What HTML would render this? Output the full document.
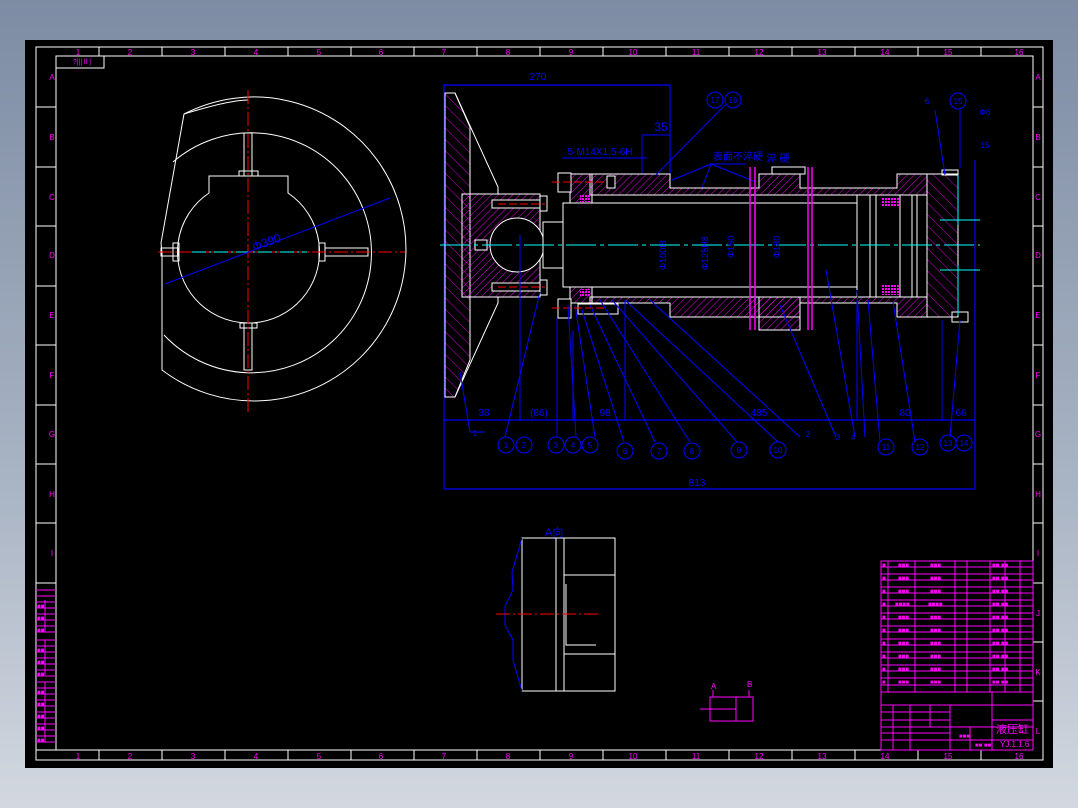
<!DOCTYPE html>
<html><head><meta charset="utf-8"><style>
html,body{margin:0;padding:0;width:1078px;height:808px;overflow:hidden;background:linear-gradient(#7d8ca4,#a9b4c4 60%,#d3d8e0);}
svg{position:absolute;left:0;top:0}
text{font-family:"Liberation Sans","Noto Sans CJK SC",sans-serif}
</style></head><body>
<svg width="1078" height="808" viewBox="0 0 1078 808">
<defs>
<pattern id="h1" width="5" height="5" patternUnits="userSpaceOnUse" patternTransform="rotate(45)"><line x1="0" y1="0" x2="0" y2="5" stroke="#f0f" stroke-width="0.9"/></pattern>
<pattern id="h2" width="8" height="8" patternUnits="userSpaceOnUse" patternTransform="rotate(-45)"><line x1="0" y1="0" x2="0" y2="8" stroke="#f0f" stroke-width="0.8"/></pattern>
<pattern id="h3" width="3" height="3" patternUnits="userSpaceOnUse"><rect width="2" height="2" fill="#f0f"/></pattern>
</defs>
<rect x="25" y="40" width="1028" height="728" fill="#000"/>
<g fill="none" stroke="#fff" stroke-width="1">
<rect x="36" y="47" width="1007" height="713"/>
<rect x="56" y="56" width="977" height="694"/>
<polyline points="56,68 104,68 104,56"/>
</g>
<g stroke="#fff" stroke-width="1">
<line x1="99" y1="47" x2="99" y2="56"/><line x1="162" y1="47" x2="162" y2="56"/><line x1="225" y1="47" x2="225" y2="56"/><line x1="288" y1="47" x2="288" y2="56"/><line x1="351" y1="47" x2="351" y2="56"/><line x1="414" y1="47" x2="414" y2="56"/><line x1="477" y1="47" x2="477" y2="56"/><line x1="540" y1="47" x2="540" y2="56"/><line x1="603" y1="47" x2="603" y2="56"/><line x1="666" y1="47" x2="666" y2="56"/><line x1="729" y1="47" x2="729" y2="56"/><line x1="792" y1="47" x2="792" y2="56"/><line x1="855" y1="47" x2="855" y2="56"/><line x1="918" y1="47" x2="918" y2="56"/><line x1="981" y1="47" x2="981" y2="56"/>
<line x1="99" y1="750" x2="99" y2="760"/><line x1="162" y1="750" x2="162" y2="760"/><line x1="225" y1="750" x2="225" y2="760"/><line x1="288" y1="750" x2="288" y2="760"/><line x1="351" y1="750" x2="351" y2="760"/><line x1="414" y1="750" x2="414" y2="760"/><line x1="477" y1="750" x2="477" y2="760"/><line x1="540" y1="750" x2="540" y2="760"/><line x1="603" y1="750" x2="603" y2="760"/><line x1="666" y1="750" x2="666" y2="760"/><line x1="729" y1="750" x2="729" y2="760"/><line x1="792" y1="750" x2="792" y2="760"/><line x1="855" y1="750" x2="855" y2="760"/><line x1="918" y1="750" x2="918" y2="760"/><line x1="981" y1="750" x2="981" y2="760"/>
<line x1="36" y1="107" x2="56" y2="107"/><line x1="36" y1="167" x2="56" y2="167"/><line x1="36" y1="226" x2="56" y2="226"/><line x1="36" y1="286" x2="56" y2="286"/><line x1="36" y1="345" x2="56" y2="345"/><line x1="36" y1="405" x2="56" y2="405"/><line x1="36" y1="464" x2="56" y2="464"/><line x1="36" y1="523" x2="56" y2="523"/><line x1="36" y1="583" x2="56" y2="583"/>
<line x1="1033" y1="107" x2="1043" y2="107"/><line x1="1033" y1="167" x2="1043" y2="167"/><line x1="1033" y1="226" x2="1043" y2="226"/><line x1="1033" y1="286" x2="1043" y2="286"/><line x1="1033" y1="345" x2="1043" y2="345"/><line x1="1033" y1="405" x2="1043" y2="405"/><line x1="1033" y1="464" x2="1043" y2="464"/><line x1="1033" y1="523" x2="1043" y2="523"/><line x1="1033" y1="583" x2="1043" y2="583"/><line x1="1033" y1="642" x2="1043" y2="642"/><line x1="1033" y1="701" x2="1043" y2="701"/>
</g>
<g fill="#f0f" font-size="8" text-anchor="middle">
<text x="78" y="55">1</text><text x="130" y="55">2</text><text x="193" y="55">3</text><text x="256" y="55">4</text><text x="319" y="55">5</text><text x="381" y="55">6</text><text x="444" y="55">7</text><text x="508" y="55">8</text><text x="571" y="55">9</text><text x="633" y="55">10</text><text x="696" y="55">11</text><text x="759" y="55">12</text><text x="822" y="55">13</text><text x="885" y="55">14</text><text x="948" y="55">15</text><text x="1019" y="55">16</text>
<text x="78" y="759">1</text><text x="130" y="759">2</text><text x="193" y="759">3</text><text x="256" y="759">4</text><text x="319" y="759">5</text><text x="381" y="759">6</text><text x="444" y="759">7</text><text x="508" y="759">8</text><text x="571" y="759">9</text><text x="633" y="759">10</text><text x="696" y="759">11</text><text x="759" y="759">12</text><text x="822" y="759">13</text><text x="885" y="759">14</text><text x="948" y="759">15</text><text x="1019" y="759">16</text>
<text x="52" y="80">A</text><text x="52" y="140">B</text><text x="52" y="200">C</text><text x="52" y="258">D</text><text x="52" y="318">E</text><text x="52" y="378">F</text><text x="52" y="437">G</text><text x="52" y="497">H</text><text x="52" y="556">I</text>
<text x="1038" y="80">A</text><text x="1038" y="140">B</text><text x="1038" y="200">C</text><text x="1038" y="258">D</text><text x="1038" y="318">E</text><text x="1038" y="378">F</text><text x="1038" y="437">G</text><text x="1038" y="497">H</text><text x="1038" y="556">I</text><text x="1038" y="616">J</text><text x="1038" y="675">K</text><text x="1038" y="734">L</text>
<text x="82" y="64" font-size="7">?|||Ⅱ|</text>
</g>
<g stroke="#f0f" stroke-width="1" fill="none">
<rect x="36" y="583" width="20" height="167" stroke="#fff"/>
<line x1="36" y1="590" x2="56" y2="590"/><line x1="36" y1="596" x2="56" y2="596"/><line x1="36" y1="602" x2="56" y2="602"/><line x1="36" y1="608" x2="56" y2="608"/><line x1="36" y1="614" x2="56" y2="614"/><line x1="36" y1="620" x2="56" y2="620"/><line x1="36" y1="626" x2="56" y2="626"/><line x1="36" y1="632" x2="56" y2="632"/><line x1="36" y1="640" x2="56" y2="640"/><line x1="36" y1="646" x2="56" y2="646"/><line x1="36" y1="652" x2="56" y2="652"/><line x1="36" y1="658" x2="56" y2="658"/><line x1="36" y1="664" x2="56" y2="664"/><line x1="36" y1="670" x2="56" y2="670"/><line x1="36" y1="676" x2="56" y2="676"/><line x1="36" y1="682" x2="56" y2="682"/><line x1="36" y1="688" x2="56" y2="688"/><line x1="36" y1="694" x2="56" y2="694"/><line x1="36" y1="700" x2="56" y2="700"/><line x1="36" y1="706" x2="56" y2="706"/><line x1="36" y1="712" x2="56" y2="712"/><line x1="36" y1="718" x2="56" y2="718"/><line x1="36" y1="724" x2="56" y2="724"/><line x1="36" y1="730" x2="56" y2="730"/><line x1="36" y1="736" x2="56" y2="736"/><line x1="36" y1="742" x2="56" y2="742"/>
<line x1="45" y1="600" x2="45" y2="632"/><line x1="45" y1="640" x2="45" y2="675"/><line x1="45" y1="682" x2="45" y2="742"/>
</g>
<g fill="#f0f" font-size="6" font-weight="bold">
<text x="37" y="608">■■</text><text x="37" y="620">■■</text><text x="37" y="632">■■</text><text x="37" y="652">■■</text><text x="37" y="664">■■</text><text x="37" y="676">■■</text><text x="37" y="694">■■</text><text x="37" y="706">■■</text><text x="37" y="718">■■</text><text x="37" y="730">■■</text><text x="37" y="742">■■</text>
</g>
<!-- LEFT VIEW -->
<g fill="none" stroke="#fff" stroke-width="1">
<path d="M184,114 A152,152 0 1 1 162,370 L162,253 L161,243 L184,114"/>
<path d="M184,114 Q230,100 248,100"/>
<path d="M173,162 A120,120 0 1 1 164,335"/>
<path d="M209,193 A71,71 0 1 0 288,193 L288,176 L209,176 Z"/>
<rect x="244" y="133" width="8" height="43"/><rect x="239" y="171" width="19" height="5"/>
<rect x="244" y="323" width="8" height="47"/><rect x="240" y="323" width="17" height="5"/>
<rect x="161" y="248" width="17" height="8"/><rect x="173" y="243" width="6" height="18"/>
<rect x="325" y="248" width="43" height="8"/><rect x="319" y="243" width="6" height="18"/>
</g>
<line x1="248" y1="90" x2="248" y2="412" stroke="#f00" stroke-dasharray="14,3,2,3"/>
<line x1="158" y1="252" x2="405" y2="252" stroke="#f00" stroke-dasharray="14,3,2,3"/>
<line x1="192" y1="252" x2="307" y2="252" stroke="#0ff" stroke-dasharray="14,3,2,3"/>
<line x1="165" y1="284" x2="390" y2="198" stroke="#00f"/>
<text x="252" y="248" fill="#00f" font-size="12" transform="rotate(-20 262 244)">Φ390</text>

<!-- MAIN VIEW -->
<g fill="none" stroke="#00f" stroke-width="1.2">
<polyline points="444,489 444,85 670,85 670,175"/>
<line x1="444" y1="420" x2="975" y2="420"/>
<polyline points="444,489 975,489 975,160"/>
</g>
<g fill="#00f" font-size="10" text-anchor="middle">
<text x="538" y="80">270</text><text x="661" y="131" font-size="12">35</text>
<text x="600" y="155">5-M14X1.5-6H</text>
<text x="484" y="416">38</text><text x="539" y="416">(86)</text><text x="605" y="416">98</text><text x="759" y="416">485</text><text x="905" y="416">80</text><text x="961" y="416">66</text>
<text x="697" y="486">813</text>
<text x="738" y="160">表面不淬硬</text><text x="778" y="162">淬 硬</text>
</g>
<g stroke="#00f" fill="none"><line x1="562" y1="158" x2="647" y2="158"/><line x1="642" y1="135" x2="642" y2="175"/><line x1="642" y1="135" x2="670" y2="135"/><line x1="710" y1="164" x2="745" y2="164"/>
<line x1="711" y1="164" x2="672" y2="180"/><line x1="711" y1="164" x2="702" y2="188"/><line x1="711" y1="164" x2="756" y2="182"/></g>
<polygon points="445,93 455,93 470,127 470,360 455,397 445,397" fill="url(#h2)" stroke="#fff"/>
<polyline points="455,93 498,187 498,194" fill="none" stroke="#fff"/>
<polyline points="498,297 498,303 455,397" fill="none" stroke="#fff"/>
<rect x="462" y="194" width="78" height="103" fill="url(#h1)" stroke="#fff"/>
<circle cx="517" cy="245" r="27" fill="#000" stroke="#fff"/>
<rect x="543" y="222" width="22" height="46" fill="#000" stroke="#fff"/>
<rect x="492" y="200" width="48" height="8" fill="#000" stroke="#fff"/><rect x="540" y="196" width="7" height="15" fill="#000" stroke="#fff"/>
<rect x="492" y="283" width="48" height="8" fill="#000" stroke="#fff"/><rect x="540" y="280" width="7" height="15" fill="#000" stroke="#fff"/>
<rect x="475" y="240" width="12" height="10" fill="#000" stroke="#fff"/>
<path d="M590,174 H670 V188 H759 V174 H800 V188 H897 V174 H927 V195 H590 Z" fill="url(#h1)" stroke="#fff"/>
<path d="M590,303 H670 V317 H759 V330 H800 V303 H897 V317 H927 V297 H590 Z" fill="url(#h1)" stroke="#fff"/>
<rect x="759" y="297" width="41" height="20" fill="url(#h1)" stroke="#fff"/>
<rect x="927" y="174" width="31" height="143" fill="url(#h2)" stroke="#fff"/>
<rect x="942" y="170" width="16" height="5" fill="none" stroke="#fff"/><rect x="952" y="312" width="16" height="10" fill="none" stroke="#fff"/>
<rect x="772" y="167" width="33" height="7" fill="none" stroke="#fff"/>
<rect x="570" y="174" width="22" height="129" fill="url(#h1)" stroke="#fff"/>
<rect x="558" y="173" width="13" height="19" fill="#000" stroke="#fff"/><rect x="558" y="299" width="13" height="19" fill="#000" stroke="#fff"/>
<rect x="578" y="304" width="40" height="10" fill="#000" stroke="#fff"/>
<rect x="563" y="203" width="294" height="84" fill="#000" stroke="#fff"/>
<rect x="857" y="195" width="60" height="102" fill="#000" stroke="#fff"/>
<line x1="870" y1="195" x2="870" y2="297" stroke="#fff"/><line x1="876" y1="195" x2="876" y2="297" stroke="#fff"/><line x1="900" y1="195" x2="900" y2="297" stroke="#fff"/><line x1="912" y1="195" x2="912" y2="297" stroke="#fff"/>
<rect x="881" y="197" width="18" height="9" fill="url(#h3)"/><rect x="881" y="285" width="18" height="10" fill="url(#h3)"/>
<rect x="580" y="195" width="10" height="7" fill="url(#h3)"/><rect x="580" y="289" width="10" height="7" fill="url(#h3)"/>
<rect x="607" y="176" width="8" height="12" fill="#000" stroke="#fff"/>
<line x1="440" y1="245" x2="980" y2="245" stroke="#0ff" stroke-dasharray="30,4,4,4"/>
<line x1="552" y1="182" x2="605" y2="182" stroke="#f00" stroke-dasharray="8,3"/>
<line x1="552" y1="308" x2="605" y2="308" stroke="#f00" stroke-dasharray="8,3"/>
<line x1="498" y1="204" x2="545" y2="204" stroke="#f00" stroke-dasharray="8,3"/><line x1="498" y1="287" x2="545" y2="287" stroke="#f00" stroke-dasharray="8,3"/>
<line x1="940" y1="220" x2="980" y2="220" stroke="#0ff"/><line x1="940" y1="270" x2="980" y2="270" stroke="#0ff"/>
<line x1="958" y1="175" x2="958" y2="225" stroke="#0ff"/><line x1="958" y1="265" x2="958" y2="315" stroke="#0ff"/>
<g stroke="#f0f" stroke-width="1.5"><line x1="750" y1="167" x2="750" y2="330"/><line x1="755" y1="167" x2="755" y2="330"/><line x1="808" y1="167" x2="808" y2="330"/><line x1="812" y1="167" x2="812" y2="330"/></g>
<g fill="#00f" font-size="9">
<text transform="translate(666 270) rotate(-90)">Φ100f8</text><text transform="translate(708 270) rotate(-90)">Φ125H8</text><text transform="translate(734 258) rotate(-90)">Φ150</text><text transform="translate(780 258) rotate(-90)">Φ180</text>
</g>
<g stroke="#00f" fill="none">
<line x1="460" y1="372" x2="470" y2="432"/><line x1="470" y1="432" x2="485" y2="432"/>
<line x1="540" y1="292" x2="505" y2="437"/><line x1="520" y1="235" x2="520" y2="420"/>
<line x1="557" y1="318" x2="557" y2="437"/><line x1="568" y1="305" x2="576" y2="437"/><line x1="575" y1="305" x2="595" y2="437"/>
<line x1="582" y1="310" x2="624" y2="442"/><line x1="590" y1="305" x2="655" y2="442"/><line x1="600" y1="300" x2="690" y2="442"/><line x1="612" y1="300" x2="737" y2="442"/><line x1="625" y1="300" x2="778" y2="442"/><line x1="650" y1="300" x2="800" y2="437"/><line x1="780" y1="305" x2="836" y2="437"/><line x1="826" y1="270" x2="855" y2="437"/><line x1="857" y1="290" x2="865" y2="437"/><line x1="868" y1="300" x2="880" y2="442"/><line x1="893" y1="302" x2="915" y2="442"/><line x1="960" y1="320" x2="950" y2="437"/>
<line x1="656" y1="175" x2="725" y2="105"/><line x1="935" y1="110" x2="945" y2="175"/><line x1="960" y1="110" x2="960" y2="168"/>
<line x1="573" y1="330" x2="573" y2="420"/><line x1="625" y1="300" x2="625" y2="420"/><line x1="857" y1="300" x2="857" y2="420"/><line x1="942" y1="320" x2="942" y2="420"/>
</g>
<g stroke="#00f" fill="none">
<circle cx="506" cy="445" r="8"/><circle cx="524" cy="445" r="8"/><circle cx="556" cy="445" r="8"/><circle cx="573" cy="445" r="8"/><circle cx="590" cy="445" r="8"/><circle cx="625" cy="451" r="8"/><circle cx="659" cy="451" r="8"/><circle cx="692" cy="451" r="8"/><circle cx="739" cy="450" r="8"/><circle cx="778" cy="450" r="8"/><circle cx="886" cy="447" r="8"/><circle cx="920" cy="447" r="8"/><circle cx="948" cy="443" r="8"/><circle cx="964" cy="443" r="8"/><circle cx="715" cy="100" r="8"/><circle cx="733" cy="100" r="8"/><circle cx="958" cy="101" r="8"/>
</g>
<g fill="#00f" font-size="8" text-anchor="middle">
<text x="506" y="448">1</text><text x="524" y="448">2</text><text x="556" y="448">3</text><text x="573" y="448">4</text><text x="590" y="448">5</text><text x="625" y="454">6</text><text x="659" y="454">7</text><text x="692" y="454">8</text><text x="739" y="453">9</text><text x="778" y="453">10</text><text x="886" y="450">11</text><text x="920" y="450">12</text><text x="948" y="446">13</text><text x="964" y="446">14</text><text x="715" y="103">17</text><text x="733" y="103">16</text><text x="958" y="104">15</text>
<text x="475" y="436">1</text><text x="808" y="437">2</text><text x="838" y="440">3</text><text x="853" y="440">4</text><text x="927" y="104">6</text><text x="985" y="115">Φ6</text><text x="985" y="148">15</text>
</g>
<g fill="none" stroke="#fff">
<rect x="522" y="538" width="93" height="153"/>
<line x1="556" y1="538" x2="556" y2="691"/><line x1="564" y1="538" x2="564" y2="691"/>
<line x1="564" y1="575" x2="615" y2="575"/><line x1="564" y1="654" x2="615" y2="654"/>
<polyline points="566,584 566,645 596,645"/>
</g>
<path d="M522,538 L512,572 L513,590 L505,606 L505,625 L513,640 L513,660 L522,691" fill="none" stroke="#00f"/>
<line x1="496" y1="614" x2="601" y2="614" stroke="#f00" stroke-dasharray="14,3,2,3"/>
<text x="545" y="536" fill="#00f" font-size="11">A向</text>
<g fill="none" stroke="#f0f"><rect x="710" y="697" width="43" height="24"/><line x1="736" y1="697" x2="736" y2="721"/><line x1="700" y1="709" x2="736" y2="709"/><line x1="713" y1="690" x2="713" y2="697"/><line x1="749" y1="690" x2="749" y2="697"/></g>
<text x="711" y="689" fill="#f0f" font-size="8">A</text><text x="747" y="687" fill="#f0f" font-size="8">B</text>
<g stroke="#f0f" fill="none" stroke-width="1">
<rect x="881" y="561" width="152" height="189"/>
<line x1="888" y1="561" x2="888" y2="692"/><line x1="915" y1="561" x2="915" y2="692"/><line x1="955" y1="561" x2="955" y2="692"/><line x1="967" y1="561" x2="967" y2="692"/><line x1="990" y1="561" x2="990" y2="692"/><line x1="1005" y1="561" x2="1005" y2="692"/><line x1="1020" y1="561" x2="1020" y2="692"/>
<line x1="881" y1="567" x2="1033" y2="567"/><line x1="881" y1="574" x2="1033" y2="574"/><line x1="881" y1="580" x2="1033" y2="580"/><line x1="881" y1="587" x2="1033" y2="587"/><line x1="881" y1="593" x2="1033" y2="593"/><line x1="881" y1="600" x2="1033" y2="600"/><line x1="881" y1="606" x2="1033" y2="606"/><line x1="881" y1="613" x2="1033" y2="613"/><line x1="881" y1="619" x2="1033" y2="619"/><line x1="881" y1="626" x2="1033" y2="626"/><line x1="881" y1="632" x2="1033" y2="632"/><line x1="881" y1="639" x2="1033" y2="639"/><line x1="881" y1="645" x2="1033" y2="645"/><line x1="881" y1="652" x2="1033" y2="652"/><line x1="881" y1="658" x2="1033" y2="658"/><line x1="881" y1="665" x2="1033" y2="665"/><line x1="881" y1="671" x2="1033" y2="671"/><line x1="881" y1="678" x2="1033" y2="678"/><line x1="881" y1="685" x2="1033" y2="685"/><line x1="881" y1="692" x2="1033" y2="692"/><line x1="881" y1="705" x2="1033" y2="705"/>
<line x1="881" y1="712" x2="950" y2="712"/><line x1="881" y1="720" x2="950" y2="720"/><line x1="881" y1="727" x2="1033" y2="727"/><line x1="881" y1="733" x2="950" y2="733"/><line x1="881" y1="740" x2="1033" y2="740"/>
<line x1="950" y1="705" x2="950" y2="750"/><line x1="992" y1="692" x2="992" y2="750"/><line x1="992" y1="720" x2="1033" y2="720"/>
<line x1="893" y1="705" x2="893" y2="750"/><line x1="910" y1="705" x2="910" y2="750"/><line x1="930" y1="705" x2="930" y2="727"/>
<line x1="970" y1="727" x2="970" y2="750"/>
</g>
<g fill="#f0f" font-size="6" font-weight="bold">
<text x="882" y="567">■</text><text x="898" y="567">■■■</text><text x="930" y="567">■■■</text><text x="992" y="567">■■ ■■</text>
<text x="882" y="580">■</text><text x="898" y="580">■■■</text><text x="930" y="580">■■■</text><text x="992" y="580">■■ ■■</text>
<text x="882" y="593">■</text><text x="898" y="593">■■■</text><text x="930" y="593">■■■</text><text x="992" y="593">■■ ■■</text>
<text x="882" y="606">■</text><text x="895" y="606">■■■■</text><text x="928" y="606">■■■■</text><text x="992" y="606">■■ ■■</text>
<text x="882" y="619">■</text><text x="898" y="619">■■■</text><text x="930" y="619">■■■</text><text x="992" y="619">■■ ■■</text>
<text x="882" y="632">■</text><text x="898" y="632">■■■</text><text x="930" y="632">■■■</text><text x="992" y="632">■■ ■■</text>
<text x="882" y="645">■</text><text x="898" y="645">■■■</text><text x="930" y="645">■■■</text><text x="992" y="645">■■ ■■</text>
<text x="882" y="658">■</text><text x="898" y="658">■■■</text><text x="930" y="658">■■■</text><text x="992" y="658">■■ ■■</text>
<text x="882" y="671">■</text><text x="898" y="671">■■■</text><text x="930" y="671">■■■</text><text x="992" y="671">■■ ■■</text>
<text x="882" y="684">■</text><text x="898" y="684">■■■</text><text x="930" y="684">■■■</text><text x="992" y="684">■■ ■■</text>
<text x="959" y="738">■■■</text><text x="975" y="747">■■ ■■</text>
</g>
<text x="996" y="733" fill="#f0f" font-size="11">液压缸</text>
<text x="1000" y="747" fill="#f0f" font-size="8">YJ.1.1.6</text>
</svg>
</body></html>
